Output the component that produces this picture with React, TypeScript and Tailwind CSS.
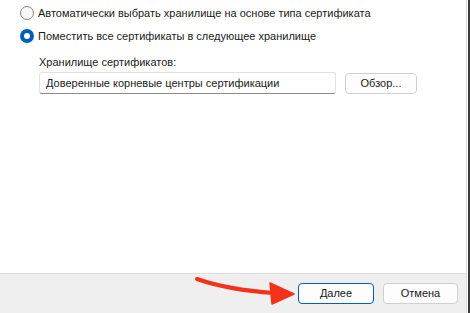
import React from "react"

const font = { fontFamily: '"Liberation Sans", "Noto Sans", sans-serif' }

function Radio({ checked, label }: { checked?: boolean; label: string }) {
  return (
    <label className="flex items-center gap-[4px] h-[16px]">
      {checked ? (
        <span className="w-[14px] h-[14px] rounded-full bg-[#005fb8] flex items-center justify-center">
          <span className="w-[6px] h-[6px] rounded-full bg-white" />
        </span>
      ) : (
        <span className="w-[14px] h-[14px] rounded-full border border-[#858585] bg-[#f7f7f7]" />
      )}
      <span className="text-[11px] text-[#1a1a1a]">{label}</span>
    </label>
  )
}

function Arrow() {
  return (
    <svg className="absolute left-[190px] top-[274px]" width="110" height="34" viewBox="0 0 110 34">
      <path d="M7 5 C 30 13, 55 17, 84 19" stroke="#f2321a" strokeWidth="4" fill="none" strokeLinecap="round" />
      <path d="M80 9 L104 20 L82 30 Z" fill="#f2321a" stroke="#f2321a" strokeWidth="1.5" strokeLinejoin="round" />
    </svg>
  )
}

export default function App() {
  return (
    <div className="relative w-[470px] h-[313px] bg-white flex overflow-hidden" style={font}>
      <div className="flex-1 flex flex-col border-r border-[#dcdcdc]">
        <div className="flex-1 pl-[20px] pt-[5px] flex flex-col">
          <Radio label="Автоматически выбрать хранилище на основе типа сертификата" />
          <div className="h-[7px]" />
          <Radio checked label="Поместить все сертификаты в следующее хранилище" />
          <div className="pl-[19px] pt-[10px] flex flex-col">
            <span className="text-[11px] text-[#1a1a1a] leading-[16px]">Хранилище сертификатов:</span>
            <div className="flex items-center gap-[9px] mt-[2px]">
              <div className="w-[297px] h-[22px] border border-[#e2e2e2] border-b-[#8a8a8a] rounded-[3px] bg-white flex items-center pl-[6px] text-[11px] text-[#1a1a1a]">
                Доверенные корневые центры сертификации
              </div>
              <button className="w-[72px] h-[21px] border border-[#d0d0d0] rounded-[4px] bg-[#fdfdfd] text-[11px] text-[#1a1a1a]">
                Обзор...
              </button>
            </div>
          </div>
        </div>
        <div className="h-[40px] bg-[#efefef] border-t border-[#dedede] flex items-center justify-end gap-[9px] pr-[8px]">
          <button className="w-[76px] h-[21px] rounded-[4px] border border-[#005fb8] bg-[#fdfdfd] text-[11px] text-[#1a1a1a]">
            Далее
          </button>
          <button className="w-[75px] h-[21px] rounded-[4px] border border-[#d0d0d0] bg-[#fdfdfd] text-[11px] text-[#1a1a1a]">
            Отмена
          </button>
        </div>
      </div>
      <div className="w-px bg-white" />
      <div className="w-[2px] bg-[#3c3c3c]" />
      <Arrow />
    </div>
  )
}
